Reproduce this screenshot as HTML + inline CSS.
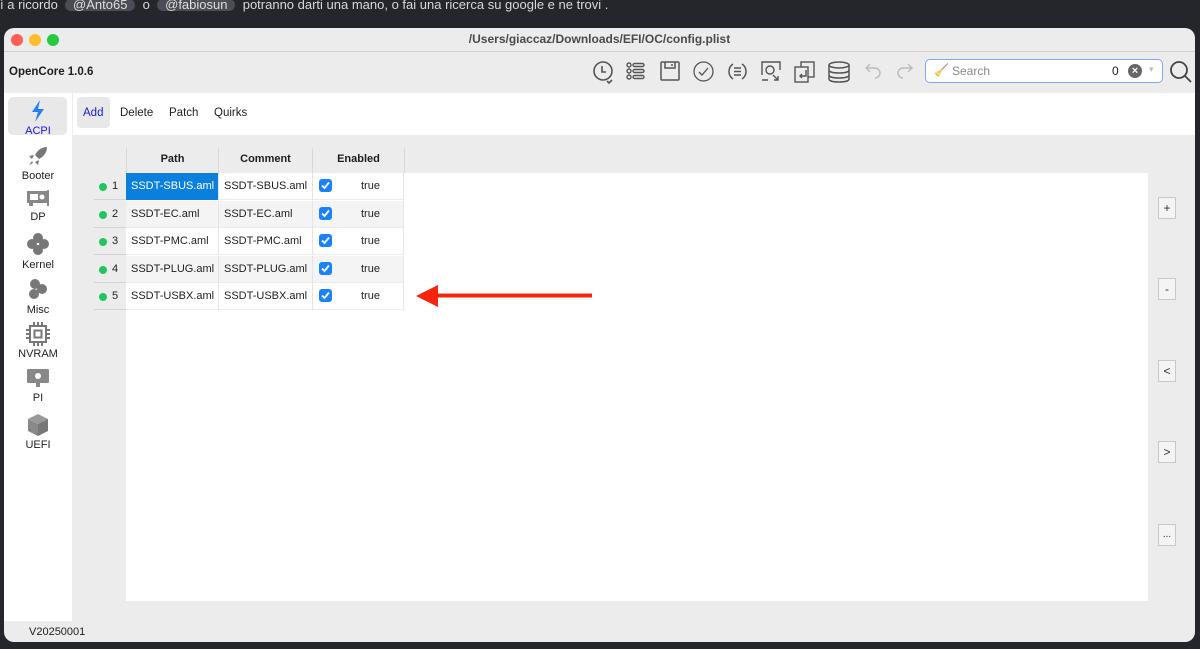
<!DOCTYPE html>
<html><head><meta charset="utf-8"><style>
*{margin:0;padding:0;box-sizing:border-box}
body{width:1200px;height:649px;background:#24262c;font-family:"Liberation Sans",sans-serif;position:relative;overflow:hidden;font-size:11px;color:#1e1e1e}
.abs{position:absolute}
.top{left:0;top:-1px;width:1200px;height:24px;color:#d8d8d8;font-size:13px;line-height:12px;white-space:nowrap}
.pill{display:inline-block;background:#4a4d55;border-radius:8px;padding:0 8px;color:#ddd}
.win{left:4px;top:28px;width:1191px;height:614px;background:#ececec;border-radius:10px;overflow:hidden}
.title{left:0;top:0;width:100%;height:24px;border-bottom:1px solid #d0d0d0;text-align:center;font-weight:bold;font-size:12px;color:#4a4a4a;line-height:22px}
.dot{width:12px;height:12px;border-radius:50%;top:6px}
.tb svg{position:absolute;top:8px}
.side{left:0;top:65px;width:68px;height:528px;background:#fff}
.si{position:absolute;left:0;width:68px;text-align:center;font-size:11px}
.tabs{left:69px;top:65px;width:1122px;height:42px;background:#fff}
.tab{position:absolute;top:14px;font-size:11.5px}
.cell{position:absolute;height:27px;line-height:27px;padding-left:5px;font-size:11px;white-space:nowrap}
.btn{position:absolute;left:1154px;width:18px;height:22px;border:1px solid #c8c8c8;background:#f4f4f4;text-align:center;line-height:20px;font-size:12px;color:#333}
.cb{position:absolute;width:13px;height:13px;background:#1a82f7;border-radius:3px}
</style></head><body>
<div class="abs top">ì a ricordo &nbsp;<span class="pill">@Anto65</span>&nbsp; o &nbsp;<span class="pill">@fabiosun</span>&nbsp; potranno darti una mano, o fai una ricerca su google e ne trovi .</div>
<div class="abs win">
 <div class="abs title">/Users/giaccaz/Downloads/EFI/OC/config.plist</div>
 <div class="abs dot" style="left:7px;background:#fe5f57"></div>
 <div class="abs dot" style="left:25px;background:#febc2e"></div>
 <div class="abs dot" style="left:43px;background:#28c840"></div>
 <div class="abs" style="left:5px;top:38px;font-weight:bold;font-size:11.5px">OpenCore 1.0.6</div>
 <div class="abs tb" style="left:0;top:25px;width:100%;height:40px">
  <svg style="left:589px" width="22" height="24" viewBox="0 0 22 24" fill="none" stroke="#555" stroke-width="1.6"><circle cx="10" cy="10" r="9"/><path d="M9 5v6h4M14 20l2 2 3-3"/></svg>
  <svg style="left:622px" width="20" height="20" viewBox="0 0 20 20" fill="none" stroke="#555" stroke-width="1.4"><circle cx="3" cy="4" r="2"/><circle cx="3" cy="10" r="2"/><circle cx="3" cy="16" r="2"/><rect x="7" y="2.5" width="11" height="3" rx="1.5"/><rect x="7" y="8.5" width="11" height="3" rx="1.5"/><rect x="7" y="14.5" width="11" height="3" rx="1.5"/></svg>
  <svg style="left:656px" width="20" height="20" viewBox="0 0 20 20" fill="none" stroke="#555" stroke-width="1.5"><rect x="1" y="1" width="18" height="18" rx="1"/><path d="M5 1v6h10V1M12 3v2"/></svg>
  <svg style="left:689px" width="21" height="21" viewBox="0 0 21 21" fill="none" stroke="#555" stroke-width="1.3"><circle cx="10.5" cy="10.5" r="9.5"/><path d="M6 11l3 3 6-7"/></svg>
  <svg style="left:723px" width="21" height="21" viewBox="0 0 21 21" fill="none" stroke="#555" stroke-width="1.5"><path d="M6 3a9 9 0 0 0 0 15M15 3a9 9 0 0 1 0 15"/><path d="M7 7h7M7 10.5h7M7 14h7"/></svg>
  <svg style="left:757px" width="21" height="21" viewBox="0 0 21 21" fill="none" stroke="#555" stroke-width="1.4"><path d="M1 14V1h18v8M1 19h6"/><circle cx="9" cy="9" r="4"/><path d="M12 14l5 5M17 15v4h-4"/></svg>
  <svg style="left:790px" width="22" height="22" viewBox="0 0 22 22" fill="none" stroke="#555" stroke-width="1.4"><rect x="7" y="1" width="13" height="15"/><rect x="1" y="6" width="13" height="15" fill="#ececec"/><path d="M12 9v6H6M8 13l-2 2 2 2"/></svg>
  <svg style="left:824px" width="22" height="22" viewBox="0 0 22 22" fill="none" stroke="#555" stroke-width="1.5"><ellipse cx="11" cy="4" rx="10" ry="3"/><path d="M1 4v14c0 2 4.5 3 10 3s10-1 10-3V4M1 9c0 2 4.5 3 10 3s10-1 10-3M1 14c0 2 4.5 3 10 3s10-1 10-3"/></svg>
  <svg style="left:860px" width="18" height="18" viewBox="0 0 18 18" fill="none" stroke="#bbb" stroke-width="1.4"><path d="M6 3L2 7l4 4M2 7h9a5 5 0 0 1 0 10"/></svg>
  <svg style="left:892px" width="18" height="18" viewBox="0 0 18 18" fill="none" stroke="#bbb" stroke-width="1.4"><path d="M12 3l4 4-4 4M16 7H7a5 5 0 0 0 0 10"/></svg>
  <svg style="left:1166px" width="22" height="22" viewBox="0 0 22 22" fill="none" stroke="#444" stroke-width="1.8"><circle cx="9" cy="9" r="8"/><path d="M15 15l6 6"/></svg>
 </div>
 <div class="abs" style="left:921px;top:31px;width:238px;height:24px;background:#fff;border:1.5px solid #7fa8f0;border-radius:5px">
  <span class="abs" style="left:8px;top:3px;font-size:12px;color:#d4a020">🧹</span>
  <span class="abs" style="left:26px;top:4px;color:#888;font-size:12px">Search</span>
  <span class="abs" style="left:186px;top:4px;font-size:12px">0</span>
  <span class="abs" style="left:202px;top:4px;width:14px;height:14px;border-radius:50%;background:#666;color:#fff;font-size:11px;line-height:14px;text-align:center;font-weight:bold">×</span>
  <span class="abs" style="left:223px;top:4px;color:#bbb;font-size:9px">▾</span>
 </div>
 <div class="abs side">
  <div class="abs" style="left:4px;top:4px;width:59px;height:38px;background:#e8e8e8;border-radius:5px"></div>
  <div class="si" style="top:7px"><svg width="16" height="22" viewBox="0 0 16 22"><path d="M10 0L2 12h6l-3 10 9-13H8z" fill="#2a7ff5"/></svg><div style="color:#1a1adc;margin-top:0px">ACPI</div></div>
  <div class="si" style="top:52px"><svg width="22" height="22" viewBox="0 0 22 22"><path d="M20 2c-6 0-10 4-12 8l4 4c4-2 8-6 8-12zM7 10l-5 1 3 3M12 15l-1 5-3-3M5 16l-3 4 4-2" fill="#777"/></svg><div style="margin-top:0px">Booter</div></div>
  <div class="si" style="top:96px"><svg width="24" height="20" viewBox="0 0 24 20"><rect x="1" y="2" width="20" height="12" fill="#888"/><rect x="4" y="5" width="8" height="6" fill="#fff"/><circle cx="16" cy="8" r="2.5" fill="#fff"/><path d="M21 1h2v16h-2M3 14v3h4v-3" fill="#888"/></svg><div style="margin-top:-1px">DP</div></div>
  <div class="si" style="top:140px"><svg width="22" height="22" viewBox="0 0 22 22" fill="#777"><circle cx="11" cy="5" r="5"/><circle cx="5" cy="11" r="5"/><circle cx="17" cy="11" r="5"/><circle cx="11" cy="17" r="5"/></svg><div style="margin-top:1px">Kernel</div></div>
  <div class="si" style="top:185px"><svg width="22" height="22" viewBox="0 0 22 22" fill="#777"><circle cx="8" cy="6" r="5"/><circle cx="15" cy="11" r="5"/><circle cx="7" cy="16" r="5"/></svg><div style="margin-top:1px">Misc</div></div>
  <div class="si" style="top:229px"><svg width="24" height="24" viewBox="0 0 24 24" fill="none" stroke="#777" stroke-width="2"><rect x="4" y="4" width="16" height="16"/><rect x="8.5" y="8.5" width="7" height="7"/><path d="M8 0v4M12 0v4M16 0v4M8 20v4M12 20v4M16 20v4M0 8h4M0 12h4M0 16h4M20 8h4M20 12h4M20 16h4"/></svg><div style="margin-top:-1px">NVRAM</div></div>
  <div class="si" style="top:275px"><svg width="24" height="22" viewBox="0 0 24 22"><rect x="1" y="1" width="22" height="14" rx="1" fill="#888"/><rect x="10" y="15" width="4" height="4" fill="#888"/><circle cx="12" cy="8" r="3" fill="#fff"/></svg><div style="margin-top:-1px">PI</div></div>
  <div class="si" style="top:320px"><svg width="22" height="24" viewBox="0 0 22 24"><path d="M11 1l10 5-10 5L1 6z" fill="#999"/><path d="M1 6v12l10 5V11z" fill="#888"/><path d="M21 6v12l-10 5V11z" fill="#777"/></svg><div style="margin-top:-1px">UEFI</div></div>
 </div>
 <div class="abs" style="left:25px;top:598px;font-size:11px">V20250001</div>
 <div class="abs tabs">
  <div class="abs" style="left:4px;top:4px;width:33px;height:31px;background:#e8e8e8;border-radius:4px"></div>
  <span class="tab" style="left:10px;color:#1a1adc">Add</span>
  <span class="tab" style="left:47px">Delete</span>
  <span class="tab" style="left:96px">Patch</span>
  <span class="tab" style="left:141px">Quirks</span>
 </div>
 <div class="abs" style="left:122px;top:145px;width:1022px;height:428px;background:#fff"></div>
 <div class="abs" style="left:122px;top:120px;width:278px;height:25px;background:#ececec;border-left:1px solid #d8d8d8">
  <div class="abs" style="left:0;top:0;width:92px;height:25px;border-right:1px solid #d8d8d8;text-align:center;line-height:23px;font-weight:bold">Path</div>
  <div class="abs" style="left:92px;top:0;width:94px;height:25px;border-right:1px solid #d8d8d8;text-align:center;line-height:23px;font-weight:bold">Comment</div>
  <div class="abs" style="left:186px;top:0;width:92px;height:25px;border-right:1px solid #d8d8d8;text-align:center;line-height:23px;font-weight:bold">Enabled</div>
 </div>
 <div id="rows"></div>
 <div class="btn" style="top:169px">+</div>
 <div class="btn" style="top:250px">-</div>
 <div class="btn" style="top:332px">&lt;</div>
 <div class="btn" style="top:413px">&gt;</div>
 <div class="btn" style="top:496px;font-size:10px">...</div>
 <svg class="abs" style="left:410px;top:255px" width="185" height="26" viewBox="0 0 185 26"><path d="M2 13L24 2v22z" fill="#f5250e"/><path d="M22 12.5H178" stroke="#f5250e" stroke-width="4"/></svg>
</div>
<script>
var names=["SSDT-SBUS.aml","SSDT-EC.aml","SSDT-PMC.aml","SSDT-PLUG.aml","SSDT-USBX.aml"],h="";
for(var i=0;i<5;i++){var t=145+i*27.5,bg=i%2?"#f4f4f4":"#fff";
h+='<div class="abs" style="left:90px;top:'+t+'px;width:32px;height:27px;border-bottom:1px solid #d4d4d4"><span class="abs" style="left:5px;top:10px;width:8px;height:8px;border-radius:50%;background:#22c55e"></span><span class="abs" style="left:18px;top:7px">'+(i+1)+'</span></div>';
h+='<div class="abs" style="left:122px;top:'+t+'px;width:278px;height:27px;background:'+bg+';border-bottom:1px solid #ebebeb">'+
'<div class="cell" style="left:0;width:92px;'+(i==0?'background:#0a7fdc;color:#fff;':'')+'">'+names[i]+'</div>'+
'<div class="cell" style="left:92px;width:94px;border-left:1px solid #e4e4e4">'+names[i]+'</div>'+
'<div class="cell" style="left:186px;width:92px;border-left:1px solid #e4e4e4;border-right:1px solid #e4e4e4"><span class="cb" style="left:6px;top:6px"><svg width="13" height="13" viewBox="0 0 13 13" style="display:block"><path d="M3 6.5l2.5 2.5 4.5-5.5" fill="none" stroke="#fff" stroke-width="1.8"/></svg></span><span class="abs" style="left:48px">true</span></div></div>';}
document.getElementById("rows").innerHTML=h;
</script>
</body></html>
